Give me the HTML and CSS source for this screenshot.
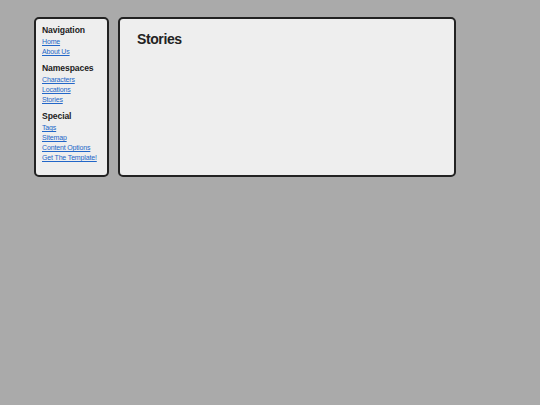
FILE: index.html
```html
<!DOCTYPE html>
<html lang="en">
<head>
<meta charset="utf-8">
<title>Stories</title>
<link rel="stylesheet" href="styles.css">
</head>
<body>
<div class="layout">
  <nav class="sidebar">
    <section class="nav-group">
      <h3 class="nav-title">Navigation</h3>
      <a class="nav-link" href="#">Home</a>
      <a class="nav-link" href="#">About Us</a>
    </section>
    <section class="nav-group">
      <h3 class="nav-title">Namespaces</h3>
      <a class="nav-link" href="#">Characters</a>
      <a class="nav-link" href="#">Locations</a>
      <a class="nav-link" href="#">Stories</a>
    </section>
    <section class="nav-group">
      <h3 class="nav-title">Special</h3>
      <a class="nav-link" href="#">Tags</a>
      <a class="nav-link" href="#">Sitemap</a>
      <a class="nav-link" href="#">Content Options</a>
      <a class="nav-link" href="#">Get The Template!</a>
    </section>
  </nav>
  <main class="content">
    <h1 class="page-title">Stories</h1>
  </main>
</div>
</body>
</html>
```
FILE: styles.css
```css
html, body {
  margin: 0;
  padding: 0;
  background: #aaaaaa;
}

body {
  font-family: "Liberation Sans", Arial, sans-serif;
  color: #222;
  padding: 17px 0 0 34px;
}

.layout {
  display: flex;
  align-items: stretch;
  gap: 9px;
}

/* left navigation box */
.sidebar {
  width: 59px;
  padding: 5px 6px 12px 6px;
  background: #eeeeee;
  border: 2px solid #222;
  border-radius: 5px;
  display: flex;
  flex-direction: column;
  gap: 5px;
}

.nav-group {
  display: flex;
  flex-direction: column;
}

.nav-title {
  margin: 0;
  font-size: 8.6px;
  line-height: 13px;
  font-weight: bold;
  letter-spacing: -0.1px;
  color: #222;
}

.nav-link {
  font-size: 7px;
  line-height: 10px;
  letter-spacing: -0.15px;
  color: #2266c8;
  text-decoration: underline;
  white-space: nowrap;
}

/* main content box */
.content {
  width: 317px;
  padding: 0 0 0 17px;
  background: #eeeeee;
  border: 2px solid #222;
  border-radius: 5px;
}

.page-title {
  margin: 13px 0 0 0;
  font-size: 14px;
  line-height: 15px;
  font-weight: bold;
  letter-spacing: -0.4px;
  color: #222;
}
```
